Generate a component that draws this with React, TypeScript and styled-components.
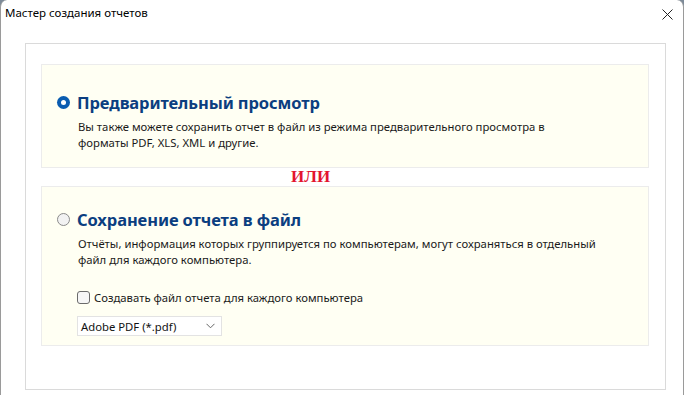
import React from "react";
import styled, { createGlobalStyle } from "styled-components";

const Global = createGlobalStyle`
  html, body { margin: 0; padding: 0; background: #7d8b99; }
  body { font-family: "Noto Sans", "Open Sans", sans-serif; }
`;

const Window = styled.div`
  width: 684px;
  height: 395px;
  box-sizing: border-box;
  background: #ffffff;
  border-left: 1px solid #9a9a9a;
  border-right: 1px solid #9a9a9a;
  border-radius: 7px 7px 0 0;
  display: flex;
  flex-direction: column;
  overflow: hidden;
`;

const TitleBar = styled.div`
  height: 31px;
  box-sizing: border-box;
  flex: none;
  display: flex;
  align-items: flex-start;
  justify-content: space-between;
  padding: 5px 10px 0 4px;
`;

const Title = styled.span`
  font-family: "Noto Sans", sans-serif;
  font-size: 11.5px;
  line-height: 16px;
  color: #000;
`;

const CloseWrap = styled.span`
  display: flex;
  padding-top: 4px;
`;

const Body = styled.div`
  flex: 1;
  padding: 12px 17px 5px 24px;
  display: flex;
  flex-direction: column;
`;

const Panel = styled.div`
  flex: 1;
  border: 1px solid #dadada;
  padding: 20px 16px 0 15px;
  display: flex;
  flex-direction: column;
`;

const Card = styled.div<{ $h: number; $top: number }>`
  height: ${(p) => p.$h}px;
  box-sizing: border-box;
  background: #fffff3;
  border: 1px solid #ececec;
  padding: ${(p) => p.$top}px 15px 0 15px;
`;

const Head = styled.div`
  display: flex;
  align-items: center;
  gap: 7px;
  height: 22px;
`;

const Radio = styled.span<{ $on?: boolean }>`
  width: 13px;
  height: 13px;
  box-sizing: border-box;
  border-radius: 50%;
  flex: none;
  display: flex;
  align-items: center;
  justify-content: center;
  ${(p) =>
    p.$on
      ? `background: #0a5cb0;`
      : `background: #f2f2f2; border: 1px solid #8a8a8a;`}
`;

const RadioDot = styled.span`
  width: 5px;
  height: 5px;
  border-radius: 50%;
  background: #ffffff;
`;

const HeadText = styled.span`
  font-family: "Noto Sans", sans-serif;
  font-weight: 700;
  font-size: 16.5px;
  color: #0b3e80;
  letter-spacing: -0.1px;
`;

const Desc = styled.p<{ $lh: number }>`
  margin: 6px 0 0 21px;
  font-size: 11.3px;
  line-height: ${(p) => p.$lh}px;
  color: #1a1a1a;
`;

const Or = styled.div`
  height: 18px;
  padding-left: 250px;
  font-family: "Liberation Serif", serif;
  font-weight: 700;
  font-size: 17px;
  line-height: 17px;
  color: #e3142f;
`;

const CheckRow = styled.label`
  display: flex;
  align-items: center;
  gap: 4px;
  margin: 22px 0 0 20px;
  font-size: 11.3px;
  color: #1a1a1a;
`;

const Box = styled.span`
  width: 13px;
  height: 13px;
  box-sizing: border-box;
  border: 1px solid #6b6b6b;
  border-radius: 3px;
  background: #f6f6f6;
  flex: none;
`;

const Select = styled.div`
  margin: 11px 0 0 20px;
  width: 145px;
  height: 20px;
  box-sizing: border-box;
  border: 1px solid #e3e3e3;
  background: #fff;
  display: flex;
  align-items: center;
  justify-content: space-between;
  padding: 0 6px 0 3px;
  font-size: 11.3px;
  color: #111;
`;

const Close = () => (
  <svg width="11" height="11" viewBox="0 0 11 11">
    <path d="M0.5 0.5 L10.5 10.5 M10.5 0.5 L0.5 10.5" stroke="#222" strokeWidth="1" />
  </svg>
);

const Chevron = () => (
  <svg width="9" height="6" viewBox="0 0 9 6">
    <path d="M0.5 0.8 L4.5 4.8 L8.5 0.8" stroke="#666" strokeWidth="1" fill="none" />
  </svg>
);

export default function App() {
  return (
    <>
      <Global />
      <Window>
        <TitleBar>
          <Title>Мастер создания отчетов</Title>
          <CloseWrap>
            <Close />
          </CloseWrap>
        </TitleBar>
        <Body>
          <Panel>
            <Card $h={104} $top={26}>
              <Head>
                <Radio $on>
                  <RadioDot />
                </Radio>
                <HeadText>Предварительный просмотр</HeadText>
              </Head>
              <Desc $lh={15.5}>
                Вы также можете сохранить отчет в файл из режима предварительного просмотра в
                <br />
                форматы PDF, XLS, XML и другие.
              </Desc>
            </Card>
            <Or>ИЛИ</Or>
            <Card $h={160} $top={21}>
              <Head>
                <Radio />
                <HeadText>Сохранение отчета в файл</HeadText>
              </Head>
              <Desc $lh={16}>
                Отчёты, информация которых группируется по компьютерам, могут сохраняться в отдельный
                <br />
                файл для каждого компьютера.
              </Desc>
              <CheckRow>
                <Box />
                Создавать файл отчета для каждого компьютера
              </CheckRow>
              <Select>
                Adobe PDF (*.pdf)
                <Chevron />
              </Select>
            </Card>
          </Panel>
        </Body>
      </Window>
    </>
  );
}
